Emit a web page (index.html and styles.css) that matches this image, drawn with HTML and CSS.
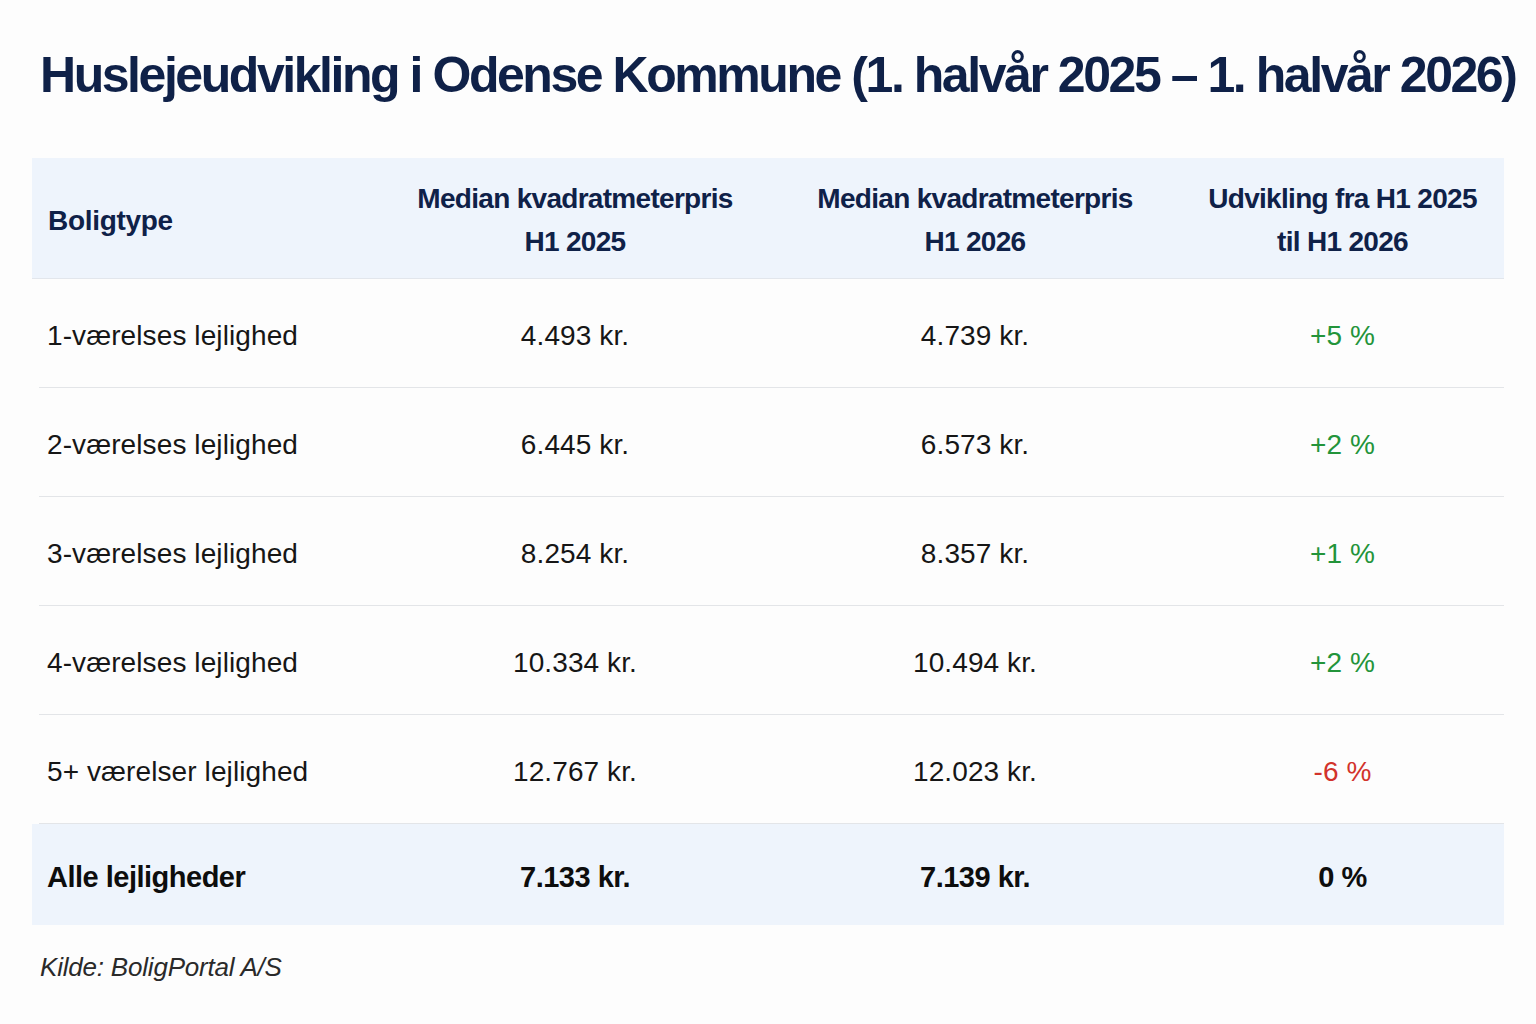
FILE: index.html
```html
<!DOCTYPE html>
<html lang="da">
<head>
<meta charset="utf-8">
<title>Huslejeudvikling i Odense Kommune</title>
<link rel="stylesheet" href="styles.css">
</head>
<body>
<main class="page">
  <h1 class="title">Huslejeudvikling i Odense Kommune (1. halvår 2025 – 1. halvår 2026)</h1>
  <table class="rent-table">
    <colgroup>
      <col class="c1"><col class="c2"><col class="c3"><col class="c4">
    </colgroup>
    <thead>
      <tr>
        <th class="left">Boligtype</th>
        <th>Median kvadratmeterpris<br>H1 2025</th>
        <th>Median kvadratmeterpris<br>H1 2026</th>
        <th class="last">Udvikling fra H1 2025<br>til H1 2026</th>
      </tr>
    </thead>
    <tbody>
      <tr><td class="left">1-værelses lejlighed</td><td>4.493 kr.</td><td>4.739 kr.</td><td class="last up">+5 %</td></tr>
      <tr><td class="left">2-værelses lejlighed</td><td>6.445 kr.</td><td>6.573 kr.</td><td class="last up">+2 %</td></tr>
      <tr><td class="left">3-værelses lejlighed</td><td>8.254 kr.</td><td>8.357 kr.</td><td class="last up">+1 %</td></tr>
      <tr><td class="left">4-værelses lejlighed</td><td>10.334 kr.</td><td>10.494 kr.</td><td class="last up">+2 %</td></tr>
      <tr><td class="left">5+ værelser lejlighed</td><td>12.767 kr.</td><td>12.023 kr.</td><td class="last down">-6 %</td></tr>
    </tbody>
    <tfoot>
      <tr><td class="left">Alle lejligheder</td><td>7.133 kr.</td><td>7.139 kr.</td><td class="last">0 %</td></tr>
    </tfoot>
  </table>
  <p class="source">Kilde: BoligPortal A/S</p>
</main>
</body>
</html>
```

FILE: styles.css
```css
html, body {
  margin: 0;
  padding: 0;
  background: #fdfdfd;
}

.page {
  width: 1472px;
  padding: 45px 32px 0 32px;
  font-family: "Liberation Sans", Arial, sans-serif;
  color: #161616;
}

.title {
  margin: 0 0 53px 8px;
  font-size: 50px;
  font-weight: 700;
  line-height: 60px;
  color: #0f2148;
  letter-spacing: -2.45px;
  white-space: nowrap;
}

.rent-table {
  width: 1472px;
  border-collapse: collapse;
  table-layout: fixed;
}

.c1 { width: 343px; }
.c2 { width: 400px; }
.c3 { width: 400px; }
.c4 { width: 329px; }

.rent-table th {
  background: #eef4fc;
  color: #0f2148;
  font-size: 28px;
  font-weight: 700;
  line-height: 43px;
  letter-spacing: -0.7px;
  height: 116px;
  padding: 4px 0 0 0;
  text-align: center;
  border-bottom: 1px solid #e2e6ec;
}

.rent-table th.left {
  text-align: left;
  padding-left: 16px;
  letter-spacing: -0.3px;
}

.rent-table .last {
  padding-left: 6px;
}

.rent-table tbody td {
  height: 102px;
  padding: 6px 0 0 0;
  font-size: 28px;
  line-height: 32px;
  letter-spacing: 0.1px;
  text-align: center;
  border-bottom: 1px solid #e3e5e8;
  color: #161616;
}

.rent-table tbody td.left {
  text-align: left;
  padding-left: 15px;
  border-bottom: none;
  background: linear-gradient(#e3e5e8, #e3e5e8) no-repeat right bottom / calc(100% - 7px) 1px;
}

.rent-table tbody td.up { color: #23943a; }
.rent-table tbody td.down { color: #d2332b; }

.rent-table tfoot td {
  background: #eef4fc;
  height: 95px;
  padding: 6px 0 0 0;
  font-size: 29px;
  font-weight: 700;
  letter-spacing: -0.5px;
  text-align: center;
  color: #0d0d0d;
}

.rent-table tfoot td.left {
  text-align: left;
  padding-left: 15px;
}

.source {
  margin: 27px 0 0 8px;
  font-size: 26px;
  font-style: italic;
  color: #2a2a2a;
  letter-spacing: -0.2px;
}
```
